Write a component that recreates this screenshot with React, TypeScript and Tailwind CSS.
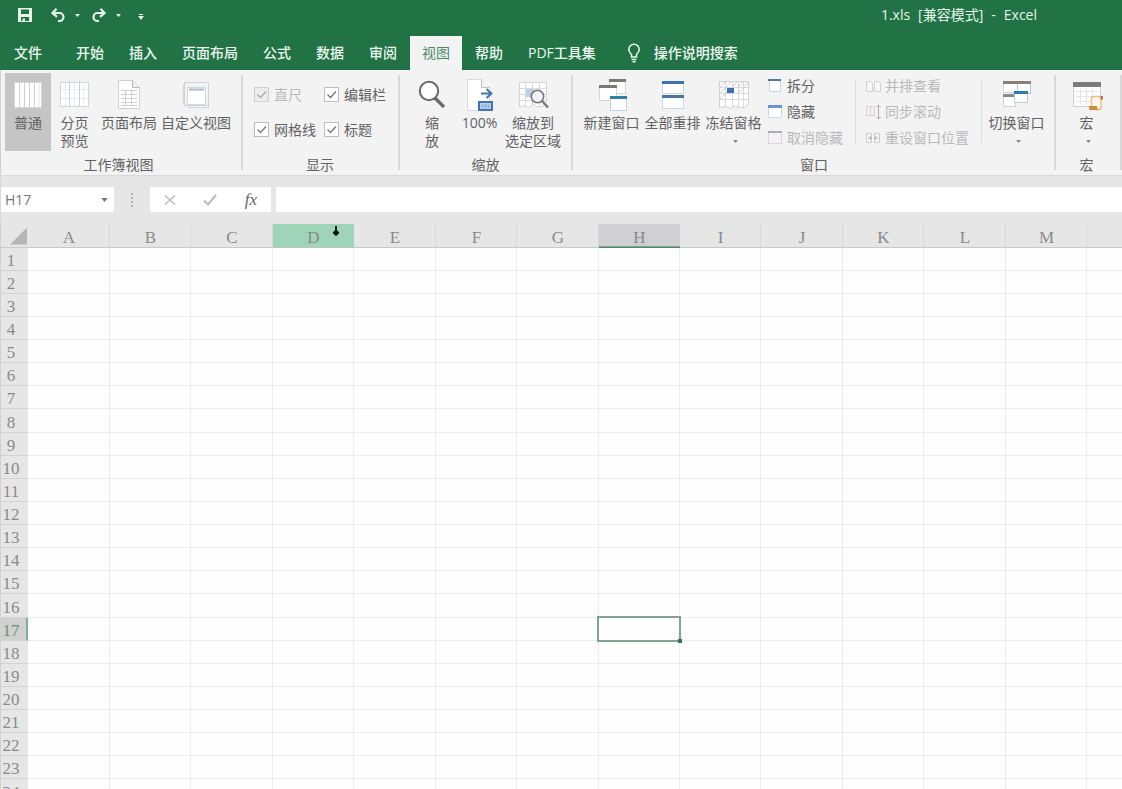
import type { ReactNode } from "react";

const uiFont = "font-['Open_Sans','Noto_Sans_CJK_SC',sans-serif]";

/* ---------- icons ---------- */

function Icon({ children }: { children: ReactNode }) {
  return (
    <svg viewBox="0 0 32 32" className="block size-8 shrink-0" fill="none" aria-hidden="true">
      {children}
    </svg>
  );
}

function Caret({ className }: { className: string }) {
  return (
    <svg viewBox="0 0 8 5" className={className} aria-hidden="true">
      <path d="M0 0h8L4 5z" fill="currentColor" />
    </svg>
  );
}

const NormalIcon = () => (
  <Icon>
    <rect x="2.500" y="3.500" width="27" height="25" fill="#fff" stroke="#d6d5d6" />
    <path d="M7.500 3v26M12.500 3v26M17.500 3v26M22.500 3v26" stroke="#cfcfd1" />
    <path d="M27 4v24" stroke="#e4e4e5" />
  </Icon>
);

const PageBreakIcon = () => (
  <Icon>
    <rect x="1.500" y="3.500" width="28" height="24" fill="#fff" stroke="#d3d6da" />
    <path d="M6.500 4v23M15.500 4v23M24.500 4v23M2 10.500h27M2 19.500h27" stroke="#e6edf5" />
    <path d="M10.500 2v26M20.500 2v26" stroke="#c3d4e6" />
  </Icon>
);

const PageLayoutIcon = () => (
  <Icon>
    <path d="M5.500 1.500h14l7 7v21h-21z" fill="#fff" stroke="#cfcfcf" />
    <path d="M19.500 1.500v7h7" fill="#f0f0f0" stroke="#b8b8b8" />
    <path d="M8 11.500h16M8 15.500h16M8 19.500h16M8 23.500h16M8 26.500h16M12.500 11v16M18.500 11v16" stroke="#d0d0d0" />
  </Icon>
);

const CustomViewIcon = () => (
  <Icon>
    <path d="M3.500 6v18.500H7M8 26.500v2h20.500V4.500" stroke="#d2d4d7" />
    <rect x="4.500" y="3.500" width="24" height="23" fill="#f3f3f4" stroke="#cfd2d6" />
    <rect x="7.500" y="8.500" width="18" height="17" fill="#fff" stroke="#d3d8de" />
    <path d="M9 10.500h15" stroke="#a9bbce" strokeWidth="2" />
  </Icon>
);

const ZoomIcon = () => (
  <Icon>
    <path d="M19 19l9 9" stroke="#6a6a6a" strokeWidth="3.200" />
    <circle cx="13" cy="12" r="9.200" fill="#fdfdfd" stroke="#6a6a6a" strokeWidth="2" />
  </Icon>
);

const HundredIcon = () => (
  <Icon>
    <path d="M3.500.500h14l8 8v23h-22z" fill="#fff" stroke="#dadada" />
    <path d="M17.500.500v8h8" fill="#f4f4f4" stroke="#bdbdbd" />
    <path d="M17 14.500h10M22.500 10l5 4.500-5 4.500" stroke="#3f75b5" strokeWidth="2" />
    <rect x="15" y="23" width="13" height="8" fill="#b9cfe9" stroke="#3f75b5" strokeWidth="2" />
    <path d="M17.500 27h8" stroke="#8fb0d8" strokeWidth="3" strokeDasharray="2 1" />
  </Icon>
);

const ZoomSelectionIcon = () => (
  <Icon>
    <path d="M2.500 3.500h27v19l-4 5h-6l-3-2-5 3-5-2-4 1z" fill="#fff" stroke="#d3d3d5" />
    <path d="M2 9.500h27M2 15.500h27M2 21.500h27M8.500 3v25M15.500 3v24M22.500 3v23" stroke="#d9d9db" />
    <rect x="9" y="10" width="8" height="8" fill="#bdd0e8" />
    <path d="M25 22l6 6.500" stroke="#777" strokeWidth="2.400" />
    <circle cx="20.500" cy="17.500" r="6.200" fill="#eef3f9" stroke="#777" strokeWidth="1.600" />
  </Icon>
);

const NewWindowIcon = () => (
  <Icon>
    <rect x="13.500" y="1.500" width="16" height="13" fill="#fff" stroke="#d6d6d6" />
    <path d="M13 1.500h17" stroke="#7c7876" strokeWidth="3" />
    <rect x="3.500" y="7.500" width="17" height="14" fill="#fff" stroke="#d6d6d6" />
    <path d="M3 7.500h18" stroke="#7c7876" strokeWidth="3" />
    <rect x="14.500" y="17.500" width="16" height="14" fill="#fff" stroke="#bfd3e6" />
    <path d="M14 18.500h17" stroke="#2f7fa8" strokeWidth="3" />
  </Icon>
);

const ArrangeIcon = () => (
  <Icon>
    <rect x="5.500" y="3.500" width="21" height="11" fill="#fff" stroke="#cdd8e6" />
    <path d="M5 3.500h22" stroke="#3b6fb6" strokeWidth="3" />
    <rect x="5.500" y="17.500" width="21" height="12" fill="#fff" stroke="#cdd8e6" />
    <path d="M5 17.500h22" stroke="#45779f" strokeWidth="3" />
  </Icon>
);

const FreezeIcon = () => (
  <Icon>
    <path d="M1.500 2.500h29v22l-4 4h-6l-3-2-5 3-5-2-6 1z" fill="#fff" stroke="#cfd0d3" />
    <path d="M1 8.500h29M1 14.500h29M1 20.500h29M7.500 2v26M14.500 2v26M20.500 2v26M25.500 2v26" stroke="#d9dadd" />
    <path d="M2 8l6-6M2 14L14 2M14 8l6-6M20 14L30 4M2 20l7-7M20 8l6-6" stroke="#d0d1d4" />
    <rect x="9" y="9" width="7" height="5" fill="#3b6fb6" />
  </Icon>
);

const SwitchIcon = () => (
  <Icon>
    <rect x="2.500" y="3.500" width="14" height="10" fill="#fff" stroke="#d2d2d2" />
    <rect x="16.500" y="3.500" width="13" height="11" fill="#fff" stroke="#a9cbe2" />
    <path d="M2 3.500h28" stroke="#8a7f7a" strokeWidth="3" />
    <rect x="2.500" y="16.500" width="12" height="11" fill="#fff" stroke="#d2d2d2" />
    <path d="M2 16.500h12" stroke="#8a8a8a" strokeWidth="3" />
    <rect x="13.500" y="12.500" width="13" height="11" fill="#fff" stroke="#b5cfe2" />
    <path d="M13 13.500h14" stroke="#2f7bab" strokeWidth="3" />
  </Icon>
);

const MacroIcon = () => (
  <Icon>
    <rect x="2.500" y="4.500" width="27" height="23" fill="#fff" stroke="#cfcfcf" />
    <path d="M2 5.500h28" stroke="#7c7c7c" strokeWidth="5" />
    <path d="M5 12.500h22M5 17.500h22M5 22.500h15M9.500 10v16M15.500 10v16M21.500 10v10" stroke="#e4e4e6" />
    <path d="M20.500 27V19.500a2 2 0 012-2H30V28a2.500 2.500 0 01-2.500 2.500H23z" fill="#fff8ee" stroke="#f3bd74" strokeWidth="1.400" />
    <path d="M18 27h8c0 2 .5 3.500 1.500 4H19c-1-.500-1-2-1-4z" fill="#cf8c3c" />
    <path d="M29.500 17h2.500v3.500h-2.500z" fill="#a97c4c" />
  </Icon>
);

function SmallIcon({ children }: { children: ReactNode }) {
  return (
    <svg viewBox="0 0 16 16" className="block size-4 shrink-0" fill="none" aria-hidden="true">
      {children}
    </svg>
  );
}

const SplitIcon = () => (
  <SmallIcon>
    <rect x="2.500" y="2.500" width="11" height="11" fill="#fff" stroke="#c9d6e4" />
    <path d="M1 2h13" stroke="#4d7c9f" strokeWidth="2" />
  </SmallIcon>
);
const HideIcon = () => (
  <SmallIcon>
    <rect x="1.500" y="3.500" width="13" height="10" fill="#fff" stroke="#ccd7ea" />
    <path d="M1 2.500h14" stroke="#6b93d6" strokeWidth="3" />
  </SmallIcon>
);
const UnhideIcon = () => (
  <SmallIcon>
    <rect x="1.500" y="2.500" width="13" height="11" fill="#f5f2f6" stroke="#dcd4dd" />
    <path d="M1 2h14" stroke="#adadaf" strokeWidth="2" />
  </SmallIcon>
);
const SideBySideIcon = () => (
  <SmallIcon>
    <path d="M1.500 3.500h4l2 2v8h-6zM9.500 3.500h4l2 2v8h-6z" fill="#f8f8f8" stroke="#cfcfd1" />
  </SmallIcon>
);
const SyncScrollIcon = () => (
  <SmallIcon>
    <path d="M1.500 2.500h8v9h-8zM5.500 3v8" fill="#f5eff1" stroke="#dcd4d7" />
    <path d="M13.500 1v14M11.500 3l2-2 2 2M11.500 13l2 2 2-2" stroke="#adadaf" />
  </SmallIcon>
);
const ResetIcon = () => (
  <SmallIcon>
    <path d="M1.500 3.500h5v3M1.500 3.500v9h5v-3M14.500 3.500h-5v3M14.500 3.500v9h-5v-3" stroke="#cdcdcf" />
    <path d="M3 8h4M9 8h4M5 6l2 2-2 2M11 6L9 8l2 2" stroke="#adadaf" />
  </SmallIcon>
);

/* ---------- ribbon parts ---------- */

function RibbonGroup({ label, className, children }: { label: string; className: string; children: ReactNode }) {
  return (
    <section className={`flex shrink-0 ${className}`} aria-label={label}>
      <div className="flex flex-col">
        <div className="flex h-[78px] items-stretch">{children}</div>
        <div className="mt-[5px] text-center leading-[18px]">{label}</div>
      </div>
    </section>
  );
}

const GroupDivider = () => <div className="mt-0.5 h-[95px] w-0.5 shrink-0 bg-[#d8d8d9]" />;
const InnerDivider = () => <div className="mt-1.5 h-16 w-px shrink-0 bg-[#dcdcdd]" />;

function BigButton({
  icon,
  lines,
  className,
  active,
  menu,
}: {
  icon: ReactNode;
  lines: string[];
  className: string;
  active?: boolean;
  menu?: boolean;
}) {
  return (
    <button
      type="button"
      aria-pressed={active}
      className={`flex shrink-0 flex-col items-center pt-1.5 leading-[18px] whitespace-nowrap ${active ? "bg-[#c6c5c6]" : ""} ${className}`}
    >
      {icon}
      <span className="mt-[3px] flex flex-col">
        {lines.map((l) => (
          <span key={l}>{l}</span>
        ))}
      </span>
      {menu && <Caret className="mt-2 ml-1 h-[3px] w-[5px] text-[#888]" />}
    </button>
  );
}

function SmallButton({ icon, label, disabled }: { icon: ReactNode; label: string; disabled?: boolean }) {
  return (
    <button
      type="button"
      disabled={disabled}
      className="flex h-[26px] items-center gap-1 whitespace-nowrap disabled:text-[#b9b9bb]"
    >
      {icon}
      {label}
    </button>
  );
}

function Check({ label, disabled }: { label: string; disabled?: boolean }) {
  return (
    <label className={`flex h-[35px] items-center gap-[5px] whitespace-nowrap ${disabled ? "text-[#b9b9bb]" : ""}`}>
      <span className="relative size-[15px]">
        <input
          type="checkbox"
          defaultChecked
          disabled={disabled}
          className="peer block size-[15px] appearance-none border border-[#bdbdbe] bg-white disabled:border-[#cfcfd0] disabled:bg-[#ececec]"
        />
        <svg
          viewBox="0 0 15 15"
          className="pointer-events-none absolute inset-0 hidden size-[15px] text-[#777] peer-checked:block peer-disabled:text-[#aaa]"
          aria-hidden="true"
        >
          <path d="M3.500 7.500l3 3 5.500-6" fill="none" stroke="currentColor" strokeWidth="1.300" />
        </svg>
      </span>
      {label}
    </label>
  );
}

/* ---------- title bar, tabs ---------- */

function TitleBar() {
  return (
    <div className="flex h-[30px] items-center pr-[85px] pl-[18px] text-[#e6f3ea]">
      <button type="button" aria-label="保存">
        <svg viewBox="0 0 14 14" className="block size-3.5" aria-hidden="true">
          <path fillRule="evenodd" d="M0 0h14v14H0zM3 1.500v4.500h8V1.500zM3 9v4h1.500v-2.500H7V13h4V9z" fill="currentColor" />
        </svg>
      </button>
      <button type="button" aria-label="撤消" className="ml-[19px]">
        <svg viewBox="0 0 14 14" className="block size-3.5" fill="none" aria-hidden="true">
          <path d="M5.500.800L1.500 5l4.500 3.800M2 5h6.500a4 4 0 010 8H7" stroke="currentColor" strokeWidth="2.200" />
        </svg>
      </button>
      <Caret className="ml-2.5 h-[3px] w-[5px]" />
      <button type="button" aria-label="恢复" className="ml-3">
        <svg viewBox="0 0 14 14" className="block size-3.5" fill="none" aria-hidden="true">
          <path d="M8.500.800l4 4.200L8 8.800M12 5H5.500a4 4 0 000 8H7" stroke="currentColor" strokeWidth="2.200" />
        </svg>
      </button>
      <Caret className="ml-2.5 h-[3px] w-[5px]" />
      <button type="button" aria-label="自定义快速访问工具栏" className="ml-[17px] pt-1">
        <svg viewBox="0 0 6 6" className="block size-1.5" aria-hidden="true">
          <path d="M1 0h4v1H1zM0 2h6L3 6z" fill="currentColor" />
        </svg>
      </button>
      <div className="ml-auto flex gap-2 text-sm">
        <span>1.xls</span>
        <span>[兼容模式]</span>
        <span>-</span>
        <span>Excel</span>
      </div>
    </div>
  );
}

const tabs = ["开始", "插入", "页面布局", "公式", "数据", "审阅", "视图", "帮助", "PDF工具集"];

function Tabs() {
  return (
    <nav className="mt-1.5 flex h-[34px] items-stretch text-sm font-medium text-[#eef8f1]">
      <button type="button" className="mr-2 px-3.5">
        文件
      </button>
      <div className="flex gap-px" role="tablist">
        {tabs.map((t) => (
          <button
            key={t}
            type="button"
            role="tab"
            aria-selected={t === "视图"}
            className={t === "视图" ? "bg-[#f3f3f3] px-3 font-normal text-[#4c8a67]" : "px-3"}
          >
            {t}
          </button>
        ))}
      </div>
      <button type="button" className="ml-[18px] flex items-center gap-3">
        <svg viewBox="0 0 16 20" className="block h-5 w-4" fill="none" aria-hidden="true">
          <path d="M5.500 14v-2.500C4 10 2.800 8.800 2.800 6.500a5.200 5.200 0 0110.400 0c0 2.300-1.200 3.500-2.700 5V14z" stroke="currentColor" strokeWidth="1.500" />
          <path d="M5.500 16.500h5M6.500 18.700h3" stroke="currentColor" strokeWidth="1.400" />
        </svg>
        操作说明搜索
      </button>
    </nav>
  );
}

function Ribbon() {
  return (
    <div className="flex h-[105px] shrink-0 border-l border-[#d0d0d1] bg-[#f3f3f3] pt-[3px] text-sm text-[#626264]">
      <RibbonGroup label="工作簿视图" className="pr-[9px] pl-1">
        <BigButton icon={<NormalIcon />} lines={["普通"]} className="w-[46px]" active />
        <BigButton icon={<PageBreakIcon />} lines={["分页", "预览"]} className="w-[47px]" />
        <BigButton icon={<PageLayoutIcon />} lines={["页面布局"]} className="w-[62px]" />
        <BigButton icon={<CustomViewIcon />} lines={["自定义视图"]} className="w-[72px]" />
      </RibbonGroup>
      <GroupDivider />
      <RibbonGroup label="显示" className="pr-3 pl-[11px]">
        <div className="grid grid-cols-[70px_auto] content-start pt-1">
          <Check label="直尺" disabled />
          <Check label="编辑栏" />
          <Check label="网格线" />
          <Check label="标题" />
        </div>
      </RibbonGroup>
      <GroupDivider />
      <RibbonGroup label="缩放" className="px-2">
        <BigButton icon={<ZoomIcon />} lines={["缩", "放"]} className="w-12" />
        <BigButton icon={<HundredIcon />} lines={["100%"]} className="w-[47px]" />
        <BigButton icon={<ZoomSelectionIcon />} lines={["缩放到", "选定区域"]} className="w-[60px]" />
      </RibbonGroup>
      <GroupDivider />
      <RibbonGroup label="窗口" className="pr-[7px] pl-2">
        <BigButton icon={<NewWindowIcon />} lines={["新建窗口"]} className="w-[61px]" />
        <BigButton icon={<ArrangeIcon />} lines={["全部重排"]} className="w-[61px]" />
        <BigButton icon={<FreezeIcon />} lines={["冻结窗格"]} className="w-[61px]" menu />
        <div className="flex flex-col pr-3 pl-[3px]">
          <SmallButton icon={<SplitIcon />} label="拆分" />
          <SmallButton icon={<HideIcon />} label="隐藏" />
          <SmallButton icon={<UnhideIcon />} label="取消隐藏" disabled />
        </div>
        <InnerDivider />
        <div className="flex flex-col pr-3 pl-[9px]">
          <SmallButton icon={<SideBySideIcon />} label="并排查看" disabled />
          <SmallButton icon={<SyncScrollIcon />} label="同步滚动" disabled />
          <SmallButton icon={<ResetIcon />} label="重设窗口位置" disabled />
        </div>
        <InnerDivider />
        <BigButton icon={<SwitchIcon />} lines={["切换窗口"]} className="ml-1 w-[61px]" menu />
      </RibbonGroup>
      <GroupDivider />
      <RibbonGroup label="宏" className="pr-[3px]">
        <BigButton icon={<MacroIcon />} lines={["宏"]} className="w-[61px]" menu />
      </RibbonGroup>
      <GroupDivider />
    </div>
  );
}

function FormulaBar() {
  return (
    <div className="flex h-[49px] shrink-0 items-center border-t border-l border-[#d9d9da] pb-px text-sm text-[#777]">
      <div className="flex h-[25px] w-[113px] shrink-0 items-center bg-white pr-1.5 pl-1">
        <input aria-label="名称框" defaultValue="H17" className="w-full min-w-0 bg-transparent outline-none" />
        <Caret className="h-1 w-[7px] shrink-0 text-[#777]" />
      </div>
      <svg viewBox="0 0 4 14" className="mx-4 h-3.5 w-1 shrink-0" aria-hidden="true">
        <path d="M1 0h2v2H1zM1 4h2v2H1zM1 8h2v2H1zM1 12h2v2H1z" fill="#b3b3b5" />
      </svg>
      <div className="flex h-[25px] w-[121px] shrink-0 items-center bg-white">
        <button type="button" aria-label="取消" className="flex flex-1 justify-center">
          <svg viewBox="0 0 12 12" className="size-3" aria-hidden="true">
            <path d="M1 1.500l10 9M11 1.500l-10 9" fill="none" stroke="#bcbcbe" strokeWidth="1.600" />
          </svg>
        </button>
        <button type="button" aria-label="输入" className="flex flex-1 justify-center">
          <svg viewBox="0 0 14 12" className="h-3 w-3.5" aria-hidden="true">
            <path d="M1 6.500l4 4L13 1" fill="none" stroke="#bcbcbe" strokeWidth="2" />
          </svg>
        </button>
        <button
          type="button"
          aria-label="插入函数"
          className="flex-1 font-['Liberation_Serif',serif] text-[17px] leading-5 text-[#666] italic"
        >
          fx
        </button>
      </div>
      <input aria-label="编辑栏" className="ml-[5px] h-[25px] min-w-0 flex-1 bg-white px-2 outline-none" />
    </div>
  );
}

/* ---------- sheet ---------- */

const columns = ["A", "B", "C", "D", "E", "F", "G", "H", "I", "J", "K", "L", "M"];
const wideColumns = ["A", "C", "E", "G", "J", "L"];
const rows = Array.from({ length: 24 }, (_, i) => i + 1);

function headStyle(c: string) {
  if (c === "D") return "border-[#b9c9c0] bg-[#9fd4b8]";
  if (c === "H") return "border-[#4f8a6b] bg-[#d0cfd1]";
  return "border-[#c9c9ca]";
}

function Sheet() {
  return (
    <div className="min-h-0 flex-1 overflow-hidden border-l border-[#d0d0d1]">
      <table className="w-full table-fixed border-separate border-spacing-0 font-['Liberation_Serif','Noto_Sans_CJK_SC',serif] text-[17px] text-[#8a8a8b]">
        <colgroup>
          <col className="w-[27px]" />
          {columns.map((c) => (
            <col key={c} className={wideColumns.includes(c) ? "w-[82px]" : "w-[81px]"} />
          ))}
          <col />
        </colgroup>
        <thead>
          <tr className="h-6">
            <td className="border-b border-[#c9c9ca] p-0">
              <svg viewBox="0 0 18 18" className="ml-auto block size-[18px] pr-px" aria-hidden="true">
                <path d="M18 0v18H0z" fill="#b5b5b7" />
              </svg>
            </td>
            {columns.map((c) => (
              <th key={c} scope="col" className={`relative border-b p-0 pt-1 leading-[19px] font-normal ${headStyle(c)}`}>
                {c}
                {c !== "D" && c !== "H" && <span className="absolute inset-y-0 right-0 w-px bg-[#d8d8d9]" />}
                {c === "H" && <span className="absolute inset-x-0 bottom-0 h-px bg-[#7da48e]" />}
                {c === "D" && (
                  <svg viewBox="0 0 8 11" className="absolute top-0.5 right-3.5 h-[11px] w-2" aria-hidden="true">
                    <path d="M3 0h2v4.500l2 1.500v1.500L4 10 1 7.500V6l2-1.500z" fill="#111" />
                  </svg>
                )}
              </th>
            ))}
            <td className="border-b border-[#c9c9ca] p-0" />
          </tr>
        </thead>
        <tbody>
          {rows.map((r) => (
            <tr key={r} className={r % 8 === 0 ? "h-6" : "h-[23px]"}>
              <th
                scope="row"
                className={`border-b border-[#d3d3d5] p-0 pt-[3px] leading-[19px] font-normal ${
                  r === 17 ? "border-r-2 border-r-[#7fae94] bg-[#d0d1d1] pr-[5px] text-[#6f8f7e]" : "pr-[7px]"
                }`}
              >
                {r}
              </th>
              {columns.map((c) => (
                <td key={c} className="relative border-r border-b border-[#ececed] bg-[#fefefe] p-0">
                  {c === "H" && r === 17 && (
                    <div className="absolute -inset-x-0.5 -inset-y-0.5 z-10 border-2 border-[#7fa491]">
                      <span className="absolute -right-[3px] -bottom-[3px] size-1 bg-[#3f6f57]" />
                    </div>
                  )}
                </td>
              ))}
              <td className="border-b border-[#ececed] bg-[#fefefe] p-0" />
            </tr>
          ))}
        </tbody>
      </table>
    </div>
  );
}

export default function App() {
  return (
    <div className={`flex h-screen flex-col overflow-hidden bg-[#e6e6e7] ${uiFont}`}>
      <header className="shrink-0 bg-[#217346]">
        <TitleBar />
        <Tabs />
      </header>
      <Ribbon />
      <FormulaBar />
      <Sheet />
    </div>
  );
}
